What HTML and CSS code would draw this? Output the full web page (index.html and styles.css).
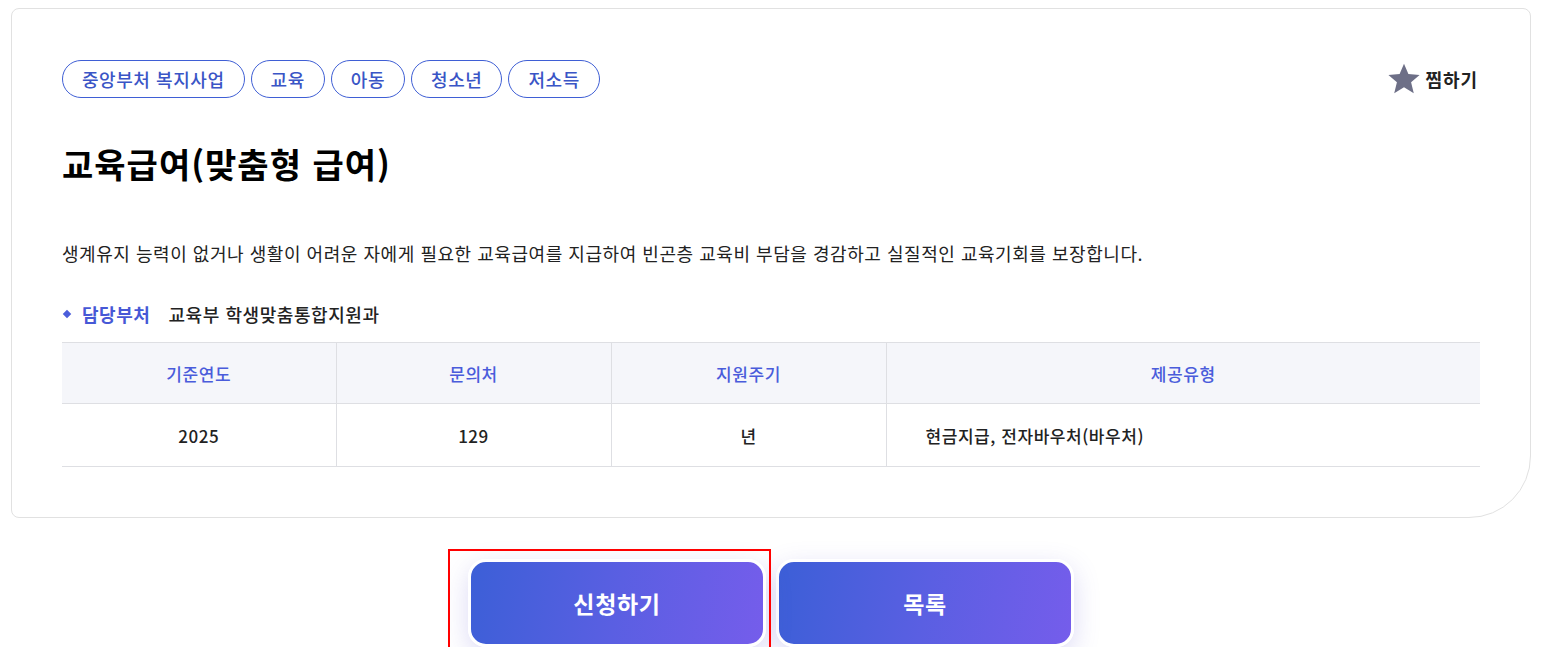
FILE: index.html
```html
<!DOCTYPE html>
<html lang="ko">
<head>
<meta charset="utf-8">
<title>교육급여(맞춤형 급여)</title>
<link rel="stylesheet" href="styles.css">
</head>
<body>
<div class="page">
  <section class="card">
    <div class="card-top">
      <ul class="tags">
        <li class="tag">중앙부처 복지사업</li>
        <li class="tag">교육</li>
        <li class="tag">아동</li>
        <li class="tag">청소년</li>
        <li class="tag">저소득</li>
      </ul>
      <button class="fav" type="button">
        <svg class="fav-icon" viewBox="0 0 24 24" width="34" height="34" aria-hidden="true"><path d="M12 1.2l3.1 7.3 7.9.6-6 5.2 1.9 7.7L12 17.8 5.1 22l1.9-7.7-6-5.2 7.9-.6z" fill="#6d6f87"/></svg>
        <span>찜하기</span>
      </button>
    </div>
    <h1 class="title">교육급여(맞춤형 급여)</h1>
    <p class="desc">생계유지 능력이 없거나 생활이 어려운 자에게 필요한 교육급여를 지급하여 빈곤층 교육비 부담을 경감하고 실질적인 교육기회를 보장합니다.</p>
    <div class="dept">
      <span class="dept-bullet"></span>
      <span class="dept-label">담당부처</span>
      <span class="dept-value">교육부 학생맞춤통합지원과</span>
    </div>
    <table class="info">
      <colgroup>
        <col class="c1"><col class="c2"><col class="c3"><col class="c4">
      </colgroup>
      <thead>
        <tr><th>기준연도</th><th>문의처</th><th>지원주기</th><th>제공유형</th></tr>
      </thead>
      <tbody>
        <tr><td>2025</td><td>129</td><td>년</td><td class="left">현금지급, 전자바우처(바우처)</td></tr>
      </tbody>
    </table>
  </section>
  <div class="actions">
    <div class="btn-wrap">
      <button class="btn" type="button">신청하기</button>
      <span class="mark"></span>
    </div>
    <button class="btn" type="button">목록</button>
  </div>
</div>
</body>
</html>
```

FILE: styles.css
```css
* { box-sizing: border-box; }
html, body { margin: 0; padding: 0; background: #fff; }
body {
  font-family: "Noto Sans CJK KR", "Noto Sans", sans-serif;
  color: #111;
  letter-spacing: 0.035em;
}
.page { padding: 8px 11px 0 11px; }
.card {
  border: 1px solid #e1e1e1;
  border-radius: 8px 8px 62px 8px;
  padding: 51px 50px 50px 50px;
  height: 510px;
}
.card-top {
  display: flex;
  justify-content: space-between;
  align-items: center;
}
.tags {
  display: flex;
  gap: 6px;
  list-style: none;
  margin: 0;
  padding: 0;
}
.tag {
  height: 38px;
  line-height: 36px;
  padding: 0 19px;
  border: 1px solid #3f5fd5;
  border-radius: 19px;
  color: #3a55c6;
  font-size: 18px;
  font-weight: 500;
}
.fav {
  display: flex;
  align-items: center;
  gap: 5px;
  border: 0;
  background: none;
  padding: 0;
  margin-right: 2px;
  font-family: inherit;
  letter-spacing: 0.05em;
  font-size: 18px;
  font-weight: 700;
  color: #222;
}
.fav-icon { display: block; }
.title {
  margin: 45px 0 0;
  font-size: 34px;
  line-height: 42px;
  font-weight: 700;
  color: #000;
  letter-spacing: 0.03em;
}
.desc {
  margin: 55px 0 0;
  font-size: 18px;
  line-height: 26px;
  color: #222;
  letter-spacing: 0.03em;
}
.dept {
  display: flex;
  align-items: center;
  margin-top: 35px;
  height: 26px;
  font-size: 18px;
}
.dept-bullet {
  width: 6px;
  height: 6px;
  background: #4a5ddb;
  transform: rotate(45deg);
  margin: 0 12px 0 2px;
}
.dept-label {
  color: #4658d6;
  font-weight: 700;
  margin-right: 18px;
}
.dept-value {
  color: #222;
  font-weight: 500;
}
.info {
  width: 100%;
  margin-top: 15px;
  border-collapse: collapse;
  table-layout: fixed;
  font-size: 17px;
}
.c1 { width: 274px; }
.c2 { width: 275px; }
.c3 { width: 275px; }
.info th, .info td {
  border-top: 1px solid #dedfe3;
  border-bottom: 1px solid #dedfe3;
  border-left: 1px solid #dedfe3;
  text-align: center;
}
.info th:first-child, .info td:first-child { border-left: 0; }
.info th {
  height: 61px;
  background: #f5f6fa;
  color: #4a5cdb;
  font-weight: 500;
}
.info td {
  height: 63px;
  color: #222;
  font-weight: 500;
}
.info td.left { text-align: left; padding-left: 39px; }
.actions {
  display: flex;
  justify-content: center;
  gap: 10px;
  margin-top: 41px;
}
.btn-wrap { position: relative; }
.btn {
  display: block;
  width: 298px;
  height: 88px;
  border: 3px solid #fff;
  border-radius: 18px;
  background: linear-gradient(100deg, #3c5fd7 0%, #5a5fe2 50%, #755deb 100%);
  color: #fff;
  font-family: inherit;
  letter-spacing: 0.03em;
  font-size: 23px;
  font-weight: 700;
  box-shadow: 0 8px 26px rgba(96, 88, 210, 0.22);
}
.mark {
  position: absolute;
  left: -20px;
  top: -10px;
  width: 323px;
  height: 102px;
  border: 2px solid #f00;
  pointer-events: none;
}
```
